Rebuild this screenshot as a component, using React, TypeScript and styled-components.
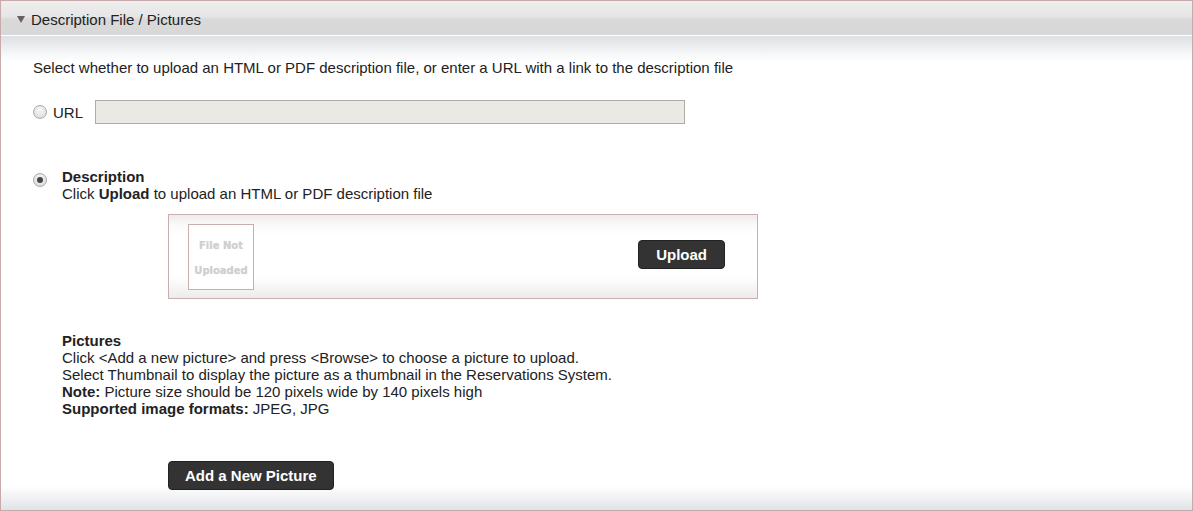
import React from "react";
import styled, { createGlobalStyle } from "styled-components";

const Global = createGlobalStyle`
  html, body { margin: 0; padding: 0; background: #fff; }
  body { font-family: "Liberation Sans", Arial, sans-serif; color: #222; }
`;

const Panel = styled.section`
  box-sizing: border-box;
  width: 1193px;
  height: 511px;
  border: 1px solid #c9aaac;
  display: flex;
  flex-direction: column;
  background: #fff;
`;

const Header = styled.div`
  height: 34px;
  display: flex;
  align-items: center;
  padding-left: 16px;
  gap: 6px;
  background: linear-gradient(#eeeeee 0%, #e6e6e6 45%, #d9d9d9 55%, #d8d8d8 100%);
  border-bottom: 1px solid #ffffff;
  font-size: 15px;
  line-height: 17px;
  color: #222;
`;

const HeaderText = styled.span`
  padding-top: 3px;
`;

const Caret = styled.span`
  width: 0;
  height: 0;
  border-left: 4.5px solid transparent;
  border-right: 4.5px solid transparent;
  border-top: 7px solid #6b5d5d;
  margin-top: 3px;
`;

const Body = styled.div`
  flex: 1;
  display: flex;
  flex-direction: column;
  padding: 23px 0 0 32px;
  background: linear-gradient(#dde1e4 0px, #f6f7f8 18px, #ffffff 26px, #ffffff calc(100% - 24px), #e0e3e6 100%);
  font-size: 15px;
  line-height: 17px;
`;

const Intro = styled.p`
  margin: 0;
`;

const UrlRow = styled.div`
  display: flex;
  align-items: center;
  margin-top: 24px;
  height: 24px;
`;

const Radio = styled.span<{ $checked?: boolean }>`
  box-sizing: border-box;
  width: 14px;
  height: 14px;
  border-radius: 50%;
  border: 1px solid #a9a9a9;
  background: radial-gradient(circle at 50% 35%, #f7f7f7 0%, #e4e4e4 60%, #d2d2d2 100%);
  display: inline-flex;
  align-items: center;
  justify-content: center;
  flex-shrink: 0;
  &::after {
    content: "";
    width: 6px;
    height: 6px;
    border-radius: 50%;
    background: ${(p) => (p.$checked ? "#444" : "transparent")};
  }
`;

const UrlLabel = styled.span`
  margin-left: 6px;
  width: 42px;
`;

const UrlInput = styled.div`
  box-sizing: border-box;
  width: 590px;
  height: 24px;
  background: #ebe9e3;
  border: 1px solid #b3a9a9;
`;

const DescRow = styled.div`
  display: flex;
  align-items: flex-start;
  margin-top: 44px;
`;

const DescRadio = styled(Radio)`
  margin-top: 5px;
  margin-right: 15px;
`;

const DescBlock = styled.div`
  display: flex;
  flex-direction: column;
`;

const Title = styled.div`
  font-weight: bold;
`;

const UploadBox = styled.div`
  box-sizing: border-box;
  width: 590px;
  height: 85px;
  margin: 12px 0 0 135px;
  border: 1px solid #c9aeb0;
  display: flex;
  align-items: center;
  padding-left: 19px;
  background: linear-gradient(#ececec 0px, #fafafa 10px, #ffffff 20px, #ffffff 62px, #ececec 83px);
`;

const Thumb = styled.div`
  box-sizing: border-box;
  width: 66px;
  height: 66px;
  border: 1px solid #c9aeb0;
  background: #fff;
  display: flex;
  flex-direction: column;
  align-items: center;
  justify-content: center;
  font-family: "DejaVu Sans", Verdana, sans-serif;
  font-weight: bold;
  font-size: 10px;
  line-height: 25px;
  color: #cfcfcf;
  text-shadow: 0 0 1px #e2e2e2;
  padding-top: 2px;
`;

const DarkButton = styled.button<{ $pad?: number }>`
  box-sizing: border-box;
  height: 29px;
  padding: 0 ${(p) => p.$pad ?? 17}px;
  border: 1px solid #222;
  border-radius: 4px;
  background: #333333;
  color: #fff;
  font-family: "Liberation Sans", Arial, sans-serif;
  font-weight: bold;
  font-size: 15px;
  cursor: pointer;
`;

const UploadButton = styled(DarkButton)`
  margin-left: auto;
  margin-right: 32px;
  margin-top: -5px;
`;

const Pictures = styled.div`
  margin: 33px 0 0 29px;
  display: flex;
  flex-direction: column;
`;

const AddButton = styled(DarkButton)`
  align-self: flex-start;
  margin: 44px 0 0 135px;
`;

export default function App() {
  return (
    <>
      <Global />
      <Panel>
        <Header>
          <Caret />
          <HeaderText>Description File / Pictures</HeaderText>
        </Header>
        <Body>
          <Intro>
            Select whether to upload an HTML or PDF description file, or enter a URL with a link to the description file
          </Intro>
          <UrlRow>
            <Radio />
            <UrlLabel>URL</UrlLabel>
            <UrlInput />
          </UrlRow>
          <DescRow>
            <DescRadio $checked />
            <DescBlock>
              <Title>Description</Title>
              <div>
                Click <b>Upload</b> to upload an HTML or PDF description file
              </div>
            </DescBlock>
          </DescRow>
          <UploadBox>
            <Thumb>
              <span>File Not</span>
              <span>Uploaded</span>
            </Thumb>
            <UploadButton>Upload</UploadButton>
          </UploadBox>
          <Pictures>
            <Title>Pictures</Title>
            <div>Click &lt;Add a new picture&gt; and press &lt;Browse&gt; to choose a picture to upload.</div>
            <div>Select Thumbnail to display the picture as a thumbnail in the Reservations System.</div>
            <div>
              <b>Note:</b> Picture size should be 120 pixels wide by 140 pixels high
            </div>
            <div>
              <b>Supported image formats:</b> JPEG, JPG
            </div>
          </Pictures>
          <AddButton $pad={16}>Add a New Picture</AddButton>
        </Body>
      </Panel>
    </>
  );
}
